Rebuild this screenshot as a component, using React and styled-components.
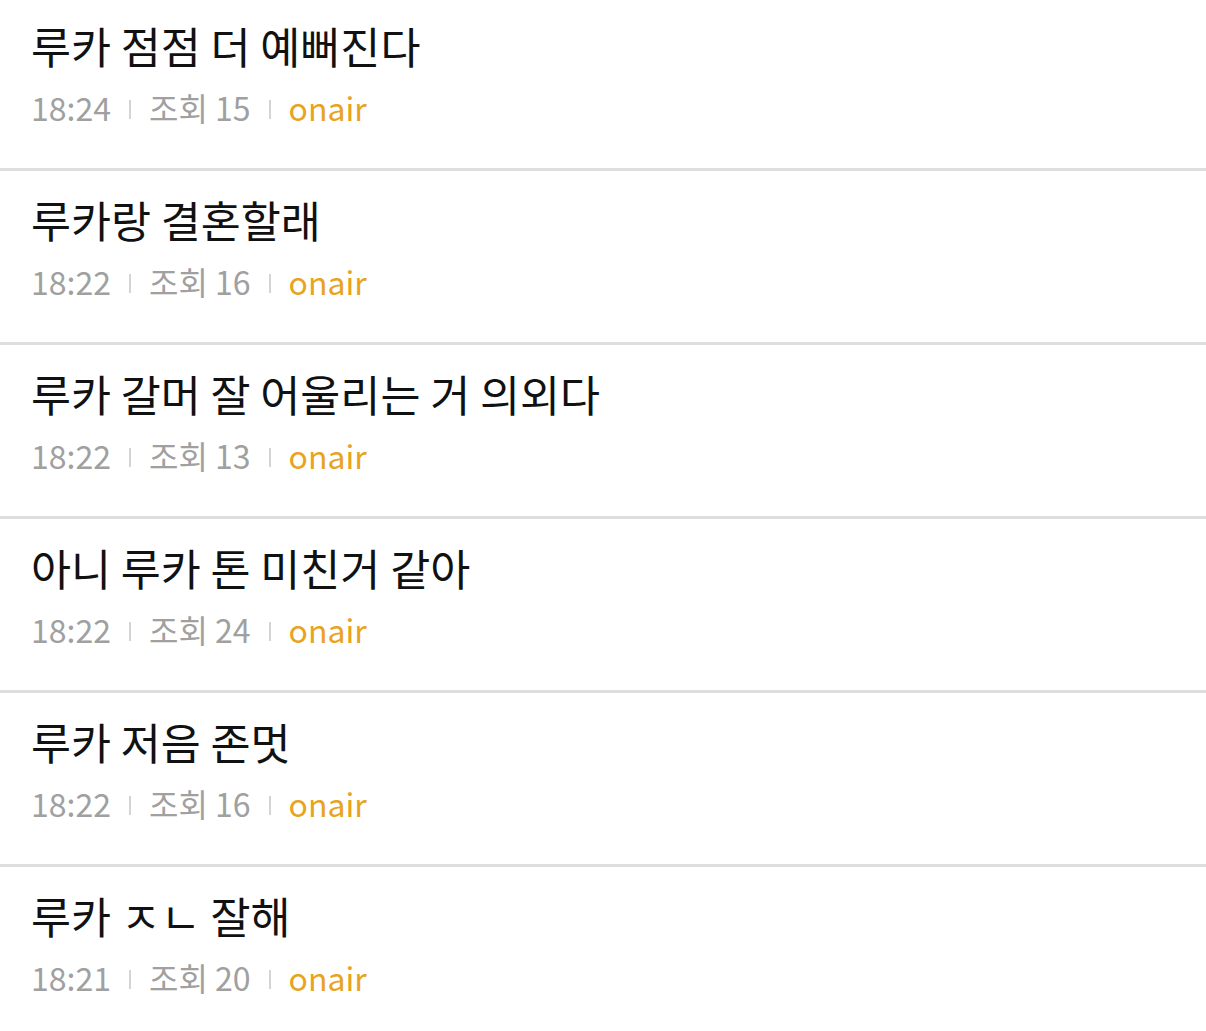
import React from "react";
import styled, { createGlobalStyle } from "styled-components";

const Global = createGlobalStyle`
  html, body { margin: 0; padding: 0; background: #fff; overflow: hidden; }
  body { font-family: "Noto Sans CJK KR", "Noto Sans", sans-serif; }
`;

const List = styled.ul`
  list-style: none;
  margin: -3px 0 0;
  padding: 0;
  width: 1206px;
`;

const Row = styled.li`
  height: 174px;
  box-sizing: border-box;
  padding: 21px 31px 0;
  border-bottom: 3px solid #dedede;
  &:last-child { border-bottom: none; }
`;

const Title = styled.div`
  font-size: 43.5px;
  line-height: 56px;
  color: #111;
`;

const Meta = styled.div`
  display: flex;
  align-items: center;
  margin-top: 11px;
  font-size: 32px;
  line-height: 44px;
  color: #a0a0a0;
`;

const Sep = styled.span`
  display: inline-block;
  width: 2px;
  height: 19px;
  background: #d4d4d4;
  margin: 5px 18px 0;
`;

const OnAir = styled.span`
  color: #e8a320;
`;

const posts = [
  { title: "루카 점점 더 예뻐진다", time: "18:24", views: 15 },
  { title: "루카랑 결혼할래", time: "18:22", views: 16 },
  { title: "루카 갈머 잘 어울리는 거 의외다", time: "18:22", views: 13 },
  { title: "아니 루카 톤 미친거 같아", time: "18:22", views: 24 },
  { title: "루카 저음 존멋", time: "18:22", views: 16 },
  { title: "루카 ㅈㄴ 잘해", time: "18:21", views: 20 },
];

export default function App() {
  return (
    <>
      <Global />
      <List>
        {posts.map((p, i) => (
          <Row key={i}>
            <Title>{p.title}</Title>
            <Meta>
              <span>{p.time}</span>
              <Sep />
              <span>조회 {p.views}</span>
              <Sep />
              <OnAir>onair</OnAir>
            </Meta>
          </Row>
        ))}
      </List>
    </>
  );
}
